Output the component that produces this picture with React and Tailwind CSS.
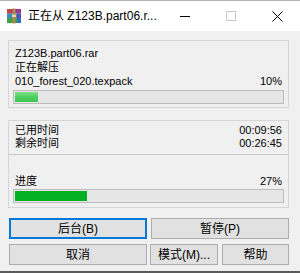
const F = "font-['Liberation_Sans','Noto_Sans_CJK_SC',sans-serif]";

function RarIcon() {
  return (
    <svg width="16" height="16" viewBox="0 0 16 16" className="ml-[6px] shrink-0">
      <rect x="1" y="1" width="14" height="4.5" fill="#9b3a8c" />
      <rect x="1" y="1" width="4" height="4.5" fill="#d2413a" />
      <rect x="1" y="5.5" width="14" height="4.5" fill="#3d8bb8" />
      <rect x="11" y="5.5" width="4" height="4.5" fill="#5a4fb0" />
      <rect x="1" y="10" width="14" height="5" fill="#3aa14a" />
      <rect x="11" y="10" width="4" height="5" fill="#2c6fc0" />
      <rect x="6.5" y="0.5" width="3" height="15" fill="#b08a4a" />
      <rect x="6" y="6.5" width="4" height="2.5" fill="#e8d7a0" />
    </svg>
  );
}

function Bar({ pct, light }) {
  return (
    <div className="h-[14px] border border-[#bcbcbc] bg-[#e6e6e6] p-[1px]">
      <div
        className={light ? "h-full bg-gradient-to-b from-[#7fe08a] via-[#4ccf5e] to-[#3fc652]" : "h-full bg-[#06b025]"}
        style={{ width: pct + "%" }}
      />
    </div>
  );
}

function Btn({ children, focus, className = "" }) {
  return (
    <div
      className={
        "h-[21px] flex items-center justify-center bg-[#e1e1e1] text-[12px] " +
        (focus ? "border-2 border-[#0078d7] " : "border border-[#adadad] ") +
        className
      }
    >
      {children}
    </div>
  );
}

export default function App() {
  return (
    <div className={"w-[300px] h-[273px] flex flex-col bg-[#f0f0f0] text-[11px] text-black overflow-hidden " + F}>
      <div className="h-[31px] shrink-0 bg-white border-t border-[#b4b4b4] flex items-center">
        <RarIcon />
        <span className="ml-[6px] text-[12px] whitespace-nowrap">正在从 Z123B.part06.r...</span>
        <div className="ml-auto flex h-full">
          <div className="w-[46px] flex items-center justify-center">
            <svg width="10" height="10" viewBox="0 0 10 10"><path d="M0 5.5H10" stroke="#000" strokeWidth="1" /></svg>
          </div>
          <div className="w-[46px] flex items-center justify-center">
            <svg width="10" height="10" viewBox="0 0 10 10"><rect x="0.5" y="0.5" width="9" height="9" fill="none" stroke="#c8c8c8" strokeWidth="1" /></svg>
          </div>
          <div className="w-[46px] flex items-center justify-center">
            <svg width="11" height="11" viewBox="0 0 11 11"><path d="M0.5 0.5L10.5 10.5M10.5 0.5L0.5 10.5" stroke="#000" strokeWidth="1" /></svg>
          </div>
        </div>
      </div>

      <div className="flex-1 flex flex-col pl-[8px] pr-[11px] pt-[9px]">
        <div className="border border-[#d6d6d6] pt-[5px] pb-[3px] pl-[4px] pr-[4px] flex flex-col">
          <div className="h-[14px] leading-[14px] px-[2px]">Z123B.part06.rar</div>
          <div className="h-[14px] leading-[14px] px-[2px]">正在解压</div>
          <div className="h-[14px] leading-[14px] px-[2px] flex justify-between">
            <span>010_forest_020.texpack</span>
            <span>10%</span>
          </div>
          <div className="mt-[2px]"><Bar pct={8.5} light /></div>
        </div>

        <div className="mt-[12px] border border-[#d6d6d6] flex flex-col">
          <div className="pt-[3px] pb-[4px] pl-[6px] pr-[6px]">
            <div className="h-[13px] leading-[13px] flex justify-between"><span>已用时间</span><span>00:09:56</span></div>
            <div className="h-[13px] leading-[13px] flex justify-between"><span>剩余时间</span><span>00:26:45</span></div>
          </div>
          <div className="h-[1px] bg-[#c8c8c8]" />
          <div className="pt-[19px] pb-[4px] pl-[4px] pr-[4px]">
            <div className="h-[14px] leading-[14px] px-[2px] flex justify-between"><span>进度</span><span>27%</span></div>
            <div className="mt-[1px]"><Bar pct={27} /></div>
          </div>
        </div>

        <div className="mt-[10px] pl-[1px] flex flex-col gap-[5px]">
          <div className="grid grid-cols-2 gap-[4px]">
            <Btn focus>后台(B)</Btn>
            <Btn>暂停(P)</Btn>
          </div>
          <div className="flex">
            <Btn className="w-[138px]">取消</Btn>
            <Btn className="w-[68px] ml-[3px]">模式(M)...</Btn>
            <Btn className="flex-1 ml-[4px]">帮助</Btn>
          </div>
        </div>
      </div>
      <div className="h-[2px] shrink-0 bg-[#5a5a5a]" />
    </div>
  );
}
